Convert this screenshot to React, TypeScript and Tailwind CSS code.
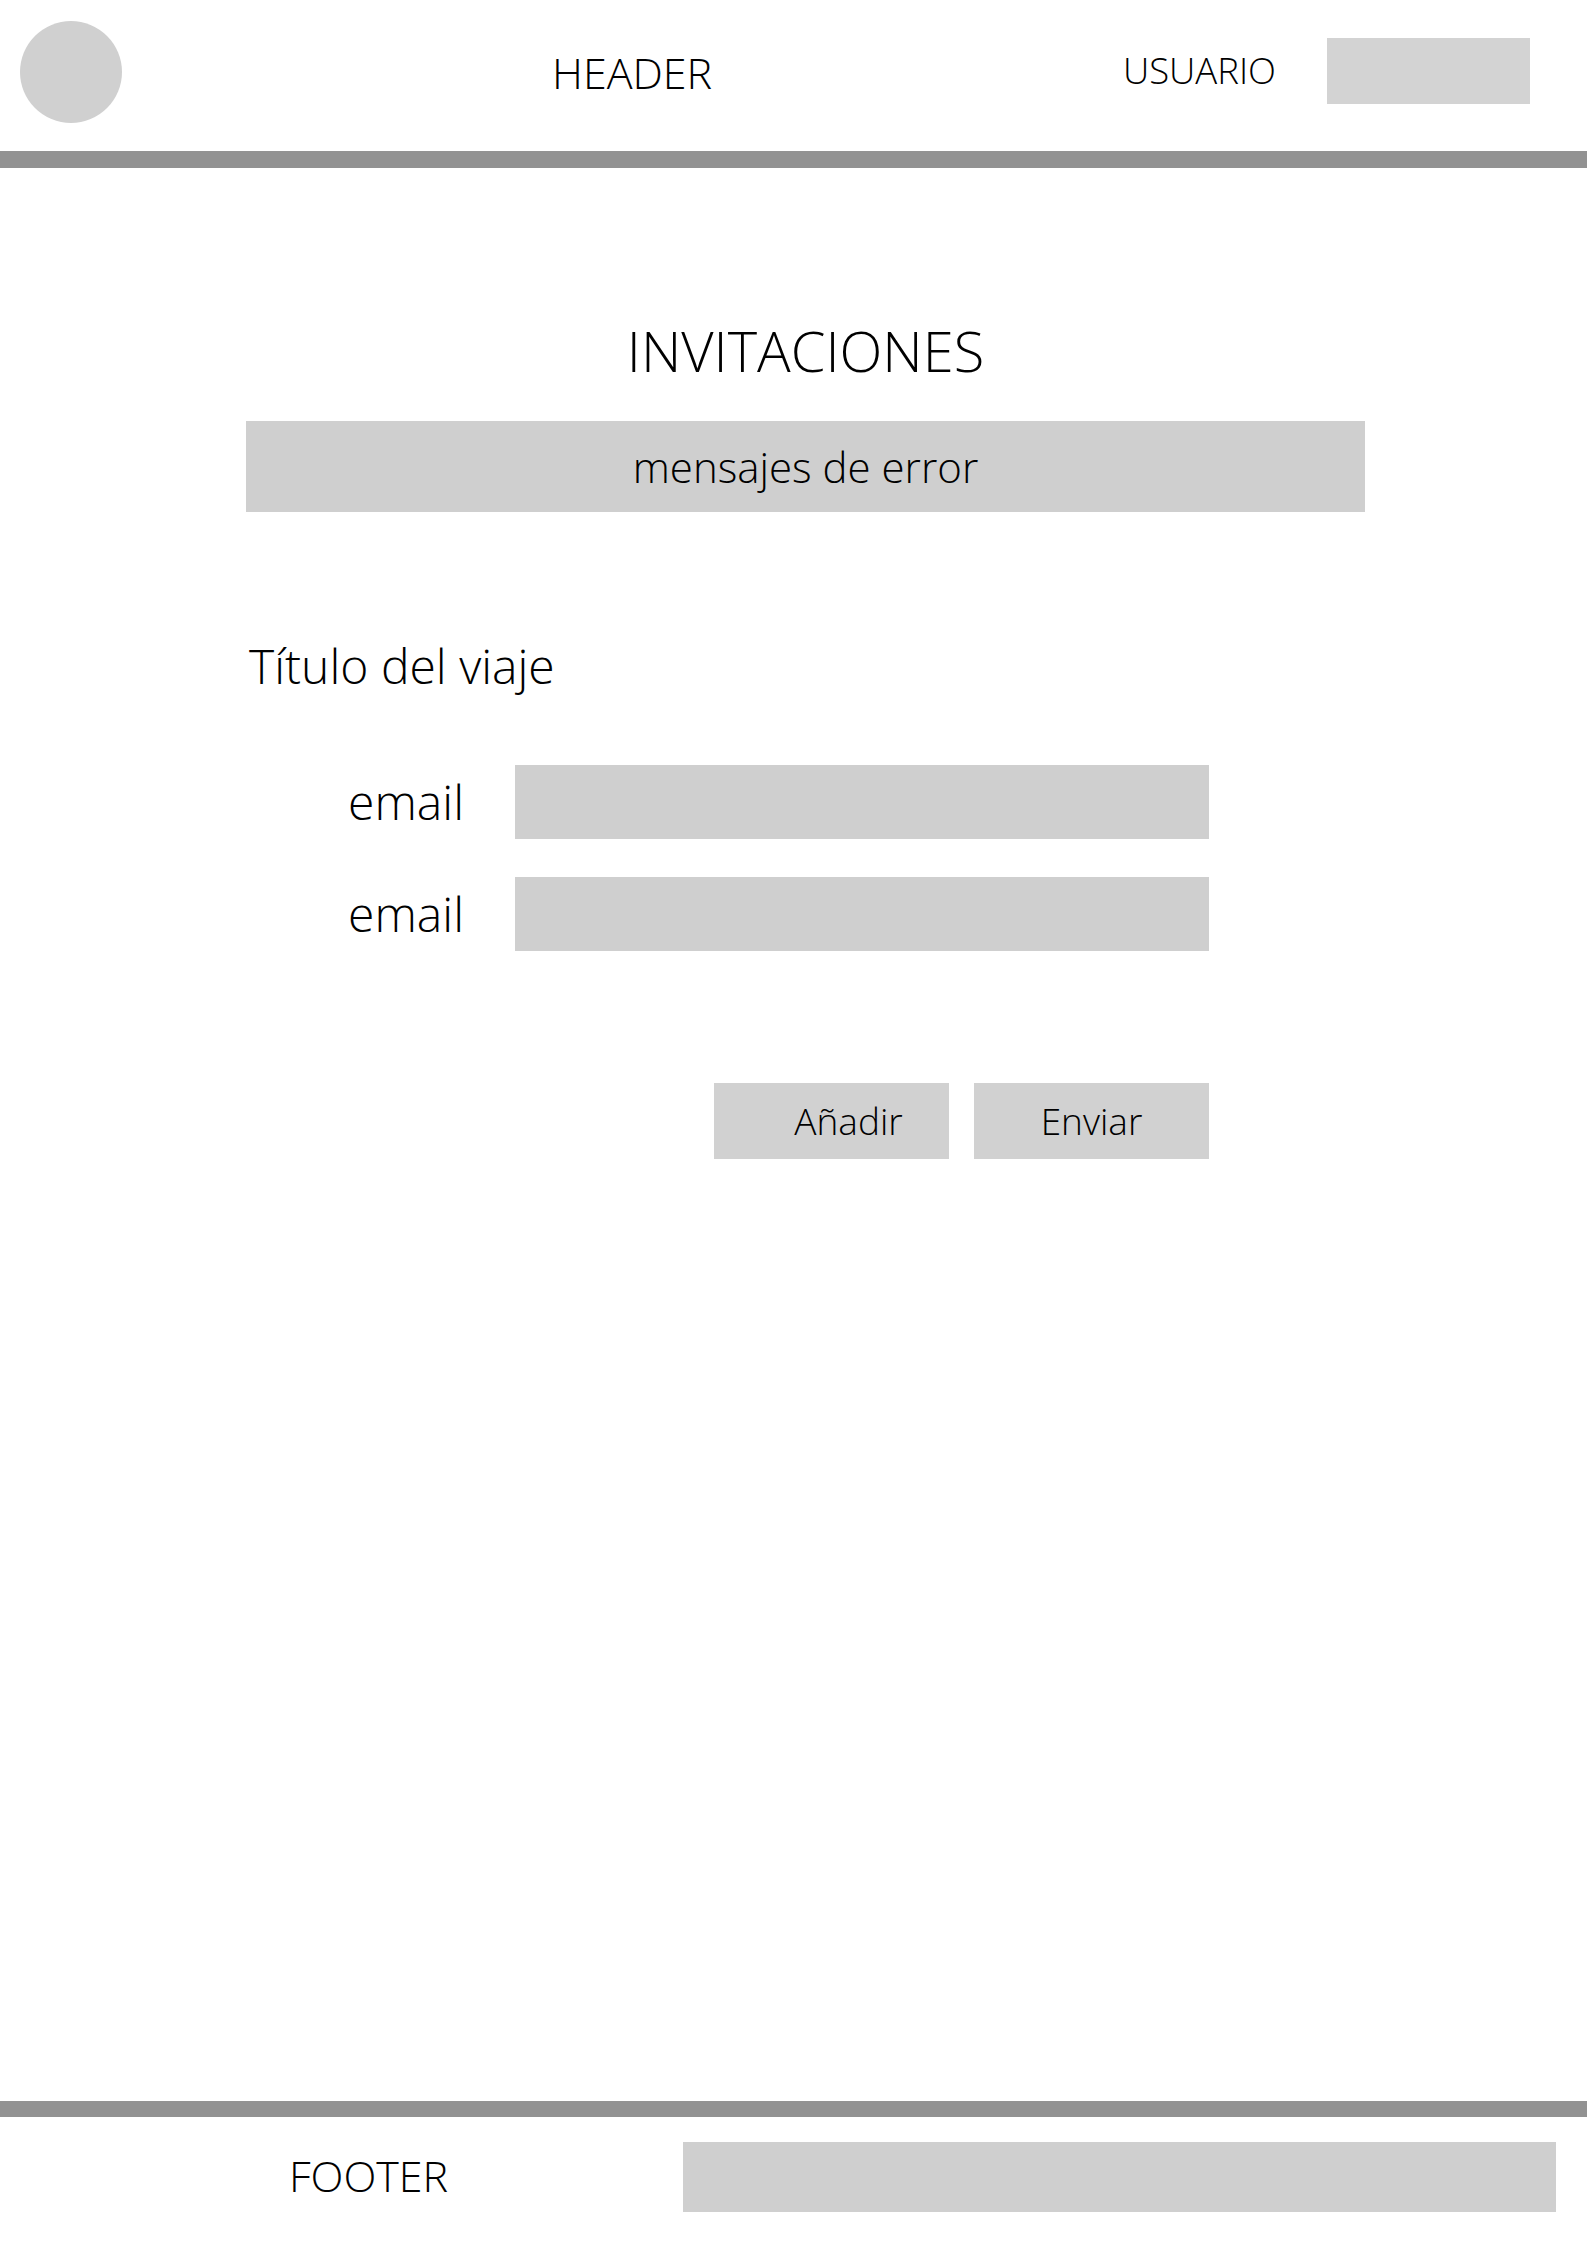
import React from 'react';

const EmailRow: React.FC<{ label: string }> = ({ label }) => (
  <div className="flex items-center gap-[51px]">
    <span className="w-[218px] text-right text-[48px] leading-none">{label}</span>
    <div className="h-[74px] w-[694px] bg-[#cfcfcf]" />
  </div>
);

const App: React.FC = () => {
  return (
    <div className="flex h-[2245px] w-[1587px] flex-col bg-white font-['Open_Sans','Liberation_Sans',sans-serif] font-light text-black">
      {/* Header */}
      <header className="flex h-[151px] items-start">
        <div className="ml-[20px] mt-[21px] h-[102px] w-[102px] rounded-full bg-[#d0d0d0]" />
        <span className="ml-[430px] mt-[51px] text-[43px] leading-none">HEADER</span>
        <span className="ml-auto mt-[52px] text-[36.5px] leading-none">USUARIO</span>
        <div className="ml-[51px] mr-[57px] mt-[38px] h-[66px] w-[203px] bg-[#d3d3d3]" />
      </header>
      <div className="h-[17px] bg-[#929292]" />

      {/* Main */}
      <main className="flex flex-1 flex-col">
        <div className="ml-[246px] flex w-[1119px] flex-col">
          <h1 className="mt-[154px] text-center text-[56px] font-light leading-none">INVITACIONES</h1>
          <div className="mt-[43px] flex h-[91px] items-center justify-center bg-[#cfcfcf] text-[42px]">
            mensajes de error
          </div>

          <h2 className="ml-[3px] mt-[130px] text-[48px] leading-none">Título del viaje</h2>

          <div className="mt-[75px] flex flex-col gap-[38px]">
            <EmailRow label="email" />
            <EmailRow label="email" />
          </div>

          <div className="ml-[468px] mt-[132px] flex gap-[25px]">
            <button className="flex h-[76px] w-[235px] items-center justify-center bg-[#d1d1d1] pl-[34px] text-[37px] font-light">
              Añadir
            </button>
            <button className="flex h-[76px] w-[235px] items-center justify-center bg-[#d1d1d1] text-[37px] font-light">
              Enviar
            </button>
          </div>
        </div>
      </main>

      {/* Footer */}
      <div className="h-[16px] bg-[#929292]" />
      <footer className="flex h-[128px] items-start">
        <span className="ml-[289px] mt-[37px] text-[43px] leading-none">FOOTER</span>
        <div className="ml-auto mr-[31px] mt-[25px] h-[70px] w-[873px] bg-[#cfcfcf]" />
      </footer>
    </div>
  );
};

export default App;
